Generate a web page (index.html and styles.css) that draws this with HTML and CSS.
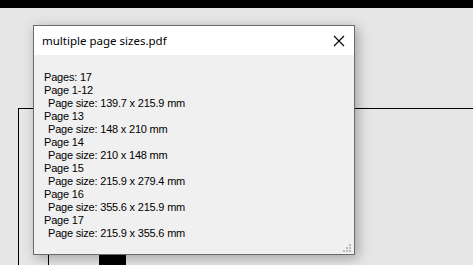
FILE: index.html
```html
<!DOCTYPE html>
<html>
<head>
  <link rel="stylesheet" href="styles.css">
</head>
<body>
  <div class="topbar"></div>
  <div class="workspace">
    <div class="frame">
      <div class="inner"></div>
      <div class="block"></div>
    </div>

    <div class="dialog">
      <div class="titlebar">
        <span class="title">multiple page sizes.pdf</span>
        <svg class="close" width="12" height="12" viewBox="0 0 12 12">
          <path d="M1 1 L11 11 M11 1 L1 11" stroke="#000" stroke-width="1.1" fill="none"/>
        </svg>
      </div>
      <div class="content">
        <div>Pages: 17</div>
        <div>Page 1-12</div>
        <div class="sub">Page size: 139.7 x 215.9 mm</div>
        <div>Page 13</div>
        <div class="sub">Page size: 148 x 210 mm</div>
        <div>Page 14</div>
        <div class="sub">Page size: 210 x 148 mm</div>
        <div>Page 15</div>
        <div class="sub">Page size: 215.9 x 279.4 mm</div>
        <div>Page 16</div>
        <div class="sub">Page size: 355.6 x 215.9 mm</div>
        <div>Page 17</div>
        <div class="sub">Page size: 215.9 x 355.6 mm</div>
      </div>
      <svg class="grip" width="10" height="10" viewBox="0 0 10 10">
        <rect x="7" y="1" width="2" height="2" fill="#b8b8b8"/>
        <rect x="4" y="4" width="2" height="2" fill="#b8b8b8"/>
        <rect x="7" y="4" width="2" height="2" fill="#b8b8b8"/>
        <rect x="1" y="7" width="2" height="2" fill="#b8b8b8"/>
        <rect x="4" y="7" width="2" height="2" fill="#b8b8b8"/>
        <rect x="7" y="7" width="2" height="2" fill="#b8b8b8"/>
      </svg>
    </div>
  </div>
</body>
</html>
```

FILE: styles.css
```css
html, body { margin: 0; padding: 0; }
body {
  width: 473px;
  height: 265px;
  overflow: hidden;
  background: #e6e6e6;
}
.topbar { height: 8px; background: #000; }
.workspace { position: relative; height: 257px; }

/* page outline behind the dialog */
.frame {
  position: absolute;
  left: 18px;
  top: 100px;
  right: 0;
  bottom: 0;
  border-top: 1px solid #000;
  border-left: 1px solid #000;
}
.inner {
  position: absolute;
  left: 29px;
  top: 60px;
  bottom: 0;
  border-left: 1px solid #000;
}
.block {
  position: absolute;
  left: 80px;
  top: 120px;
  width: 27px;
  bottom: 0;
  background: #000;
}

.dialog {
  position: absolute;
  left: 33px;
  top: 17px;
  width: 320px;
  height: 228px;
  border: 1px solid #6b6b6b;
  background: #f0f0f0;
  box-shadow: 3px 3px 12px rgba(0, 0, 0, 0.3);
  display: flex;
  flex-direction: column;
}
.titlebar {
  height: 29px;
  background: #fff;
  display: flex;
  align-items: center;
  justify-content: space-between;
  padding: 0 9px 0 8px;
}
.title {
  font-family: "Noto Sans", sans-serif;
  font-size: 11.5px;
  color: #000;
}
.close { display: block; }
.content {
  padding: 16px 0 0 10px;
  font-family: "Liberation Sans", Arial, sans-serif;
  font-size: 11px;
  line-height: 13px;
  letter-spacing: -0.2px;
  color: #000;
}
.sub { padding-left: 4px; }
.grip {
  position: absolute;
  right: 2px;
  bottom: 1px;
}
```
